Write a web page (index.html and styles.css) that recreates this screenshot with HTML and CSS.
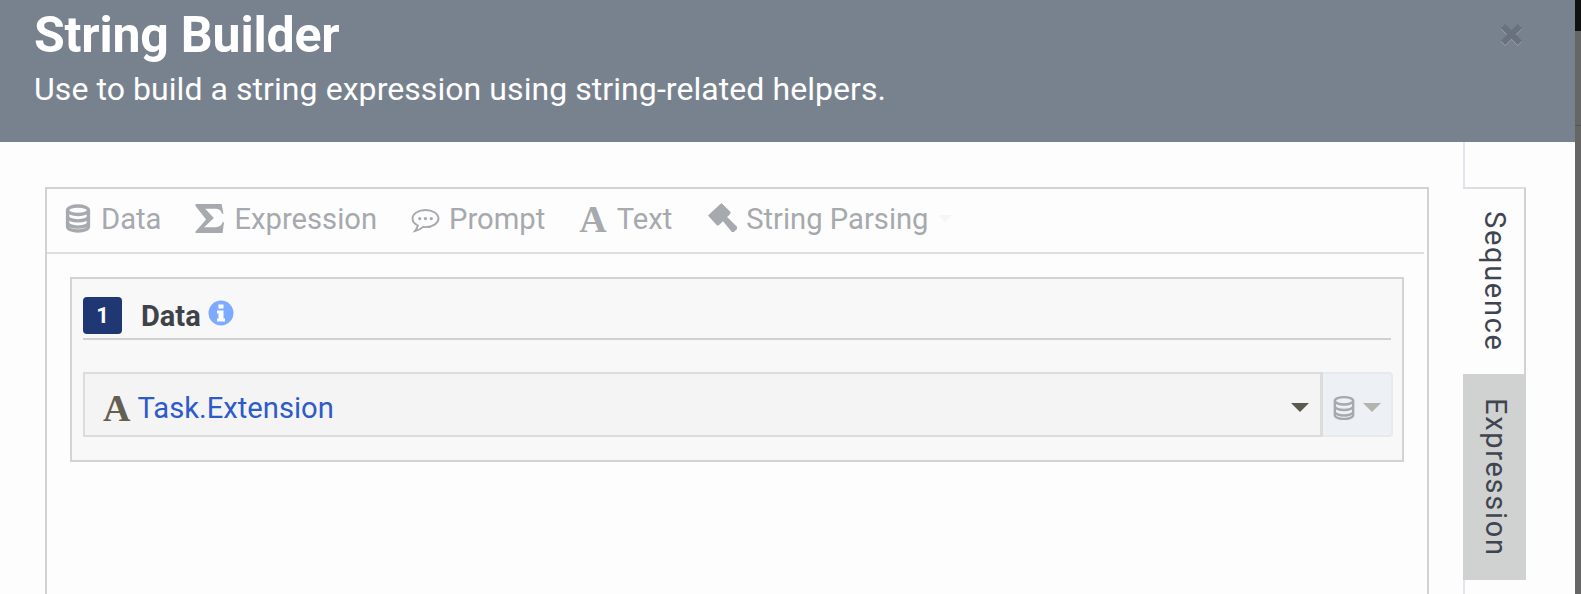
FILE: index.html
```html
<!DOCTYPE html>
<html lang="en">
<head>
<meta charset="utf-8">
<title>String Builder</title>
<link rel="stylesheet" href="styles.css">
</head>
<body>
<div class="page">
  <div class="dialog">
    <header class="head">
      <div class="head-text">
        <h1 class="title">String Builder</h1>
        <p class="subtitle">Use to build a string expression using string-related helpers.</p>
      </div>
      <svg class="close" viewBox="0 0 22 22"><path d="M0 4.500 4.500 0 11 6.500 17.500 0 22 4.500 15.500 11 22 17.500 17.500 22 11 15.500 4.500 22 0 17.500 6.500 11z"/></svg>
    </header>
    <div class="body">
      <section class="builder">
        <nav class="toolbar">
          <span class="tool">
            <svg class="ic ic-db" viewBox="0 0 26 30"><use href="#db"/></svg>Data
          </span>
          <span class="tool">
            <svg class="ic ic-sigma" viewBox="0 0 30 30"><path d="M0 0h27l2 10h-1.500C26 6 24 5 20 5H10l9 9.500L9 24h12c4 0 6-2 7-5h1.500L28 30H0v-1.500L11 16 0 2z"/></svg>Expression
          </span>
          <span class="tool">
            <svg class="ic ic-chat" viewBox="0 0 30 26"><path d="M15 2C7.500 2 1.500 6 1.500 11c0 3 2 5.500 5.500 7.200-.3 1.800-1.200 3.800-3 5.800 3.300-.5 6.200-2 8.500-4.300.9.100 1.700.2 2.500.2 7.500 0 13.500-4 13.500-8.900S22.500 2 15 2z" fill="none" stroke="currentColor" stroke-width="2"/><circle cx="9" cy="11" r="1.700"/><circle cx="15" cy="11" r="1.700"/><circle cx="21" cy="11" r="1.700"/></svg>Prompt
          </span>
          <span class="tool">
            <span class="font-a">A</span>Text
          </span>
          <span class="tool tool-last">
            <svg class="ic ic-gavel" viewBox="0 0 28 28"><path d="M0 12 13 0l9 9-1 2-10 10-2 1zM14 17l4-4 10 10v2l-3 3h-2z"/></svg>String Parsing<span class="faint-caret"></span>
          </span>
        </nav>
        <div class="step">
          <div class="step-head">
            <span class="badge">1</span>
            <span class="step-title">Data</span>
            <svg class="info" viewBox="0 0 26 26"><circle cx="13" cy="13" r="12.500"/><path d="M10.500 4.500h5v4h-5zM9 10.500h6.500v8H17v3H9v-3h1.500v-5H9z" fill="#fff"/></svg>
          </div>
          <div class="field">
            <div class="select">
              <span class="font-a font-a-dark">A</span>
              <span class="value">Task.Extension</span>
              <span class="caret"></span>
            </div>
            <div class="addon">
              <svg class="ic-db-small" viewBox="0 0 26 30"><use href="#db"/></svg>
              <span class="caret caret-light"></span>
            </div>
          </div>
        </div>
      </section>
      <aside class="tabs">
        <div class="tab tab-active">Sequence</div>
        <div class="tab tab-off">Expression</div>
      </aside>
    </div>
  </div>
  <div class="edge"></div>
</div>
<svg class="defs" width="0" height="0">
  <defs>
    <g id="db" fill="none" stroke="currentColor">
      <ellipse cx="13" cy="6.500" rx="10.800" ry="4.400"/>
      <path d="M2.200 6.500v17c0 2.400 4.800 4.400 10.800 4.400s10.800-2 10.800-4.400v-17"/>
      <path d="M2.200 13c0 2.400 4.800 4.400 10.800 4.400s10.800-2 10.800-4.400M2.200 19.500c0 2.400 4.800 4.400 10.800 4.400s10.800-2 10.800-4.400"/>
    </g>
  </defs>
</svg>
</body>
</html>
```
FILE: styles.css
```css
* { box-sizing: border-box; }
html, body { margin: 0; height: 100%; overflow: hidden; }
body { font-family: Roboto, "Liberation Sans", sans-serif; background: #fdfdfd; }
.page { display: flex; height: 594px; overflow: hidden; }
.dialog { width: 1575px; display: flex; flex-direction: column; background: #fdfdfd; }
.edge { flex: 1; background: linear-gradient(#111 0, #111 31px, #666 31px, #666 125px, #555 125px, #555 126px, #666 126px); }
.defs { position: absolute; }

.head { height: 142px; flex: none; background: #78828e; display: flex; justify-content: space-between; color: #fff; padding: 0 53px 0 34px; }
.title { margin: 7px 0 0; font-size: 50px; line-height: 56px; font-weight: 700; letter-spacing: -0.2px; }
.subtitle { margin: 4px 0 0; font-size: 32px; line-height: 44px; font-weight: 400; letter-spacing: 0.065px; }
.close { width: 21px; height: 21px; margin-top: 24px; fill: #69717d; filter: drop-shadow(0 1px 0 #98a0aa); }

.body { flex: 1; display: flex; padding: 45px 0 0 45px; min-height: 0; }
.builder { width: 1384px; height: 500px; flex: none; border: 2px solid #d2d2d2; background: #fdfdfd; padding-right: 3px; }
.toolbar { height: 65px; display: flex; align-items: center; gap: 34px; padding: 0 0 4px 18px; color: #a6a9ad; border-bottom: 2px solid #dedede; font-size: 29.2px; }
.tool { display: flex; align-items: center; fill: #a6a9ad; }
.tool-last { margin-left: 2px; }
.ic { flex: none; margin-right: 10px; }
.ic-db { width: 26px; height: 29px; stroke-width: 3.500; }
.ic-sigma { width: 30px; height: 29px; margin-right: 9px; }
.ic-chat { width: 29px; height: 25px; margin: 4px 9px 0 0; }
.ic-gavel { width: 29px; height: 29px; margin: -2px 9px 0 0; }
.font-a { font-family: "Liberation Serif", serif; font-weight: 700; font-size: 38px; line-height: 1; margin-right: 10px; }
.font-a-dark { color: #645f52; margin: 0 7px 0 18px; }
.faint-caret { width: 0; height: 0; border: 7px solid transparent; border-top-color: #f6f6f6; border-bottom: 0; margin-left: 9px; }

.step { margin: 23px 0 0 23px; width: 1334px; height: 185px; border: 2px solid #d3d3d3; background: #f8f8f8; padding: 18px 11px 0 11px; }
.step-head { height: 43px; display: flex; align-items: flex-start; border-bottom: 2px solid #d0d0d0; }
.badge { width: 39px; height: 37px; border-radius: 4px; background: #1f3874; color: #fff; font-weight: 700; font-size: 22px; display: flex; align-items: center; justify-content: center; }
.step-title { margin-left: 19px; font-weight: 700; font-size: 29px; line-height: 38px; color: #3e4249; }
.info { width: 26px; height: 26px; margin: 3px 0 0 7px; fill: #7dabff; }

.field { margin: 32px -2px 0 0; height: 65px; display: flex; }
.select { width: 1240px; border: 2px solid #dcdcdc; border-right-width: 3px; background: #f4f4f4; display: flex; align-items: center; padding: 6px 11px 0 0; }
.value { flex: 1; color: #2d5bc9; font-size: 29.2px; }
.caret { width: 0; height: 0; border: 9px solid transparent; border-top: 9px solid #5c594d; border-bottom: 0; }
.addon { width: 70px; background: #edf0f4; border: 2px solid #e6e9ed; border-left: 0; border-radius: 0 4px 4px 0; display: flex; align-items: center; padding: 6px 0 0 10px; gap: 8px; color: #a6a9ad; }
.caret-light { border-top-color: #b4b4ae; }
.ic-db-small { width: 22px; height: 26px; stroke-width: 2.800; }

.tabs { margin-left: 34px; width: 63px; margin-top: -45px; flex: none; padding-top: 45px; border-left: 2px solid #e3e6ed; }
.tab { writing-mode: vertical-rl; width: 63px; margin-left: -2px; display: flex; align-items: center; justify-content: flex-start; font-size: 29px; letter-spacing: 1.7px; color: #3f4550; padding: 22px 0 0 3px; }
.tab-active { height: 187px; border-top: 2px solid #dddfe3; border-right: 2px solid #d2d2d2; background: #fdfdfd; }
.tab-off { height: 206px; background: #d0d2d2; padding-top: 24px; }
```
